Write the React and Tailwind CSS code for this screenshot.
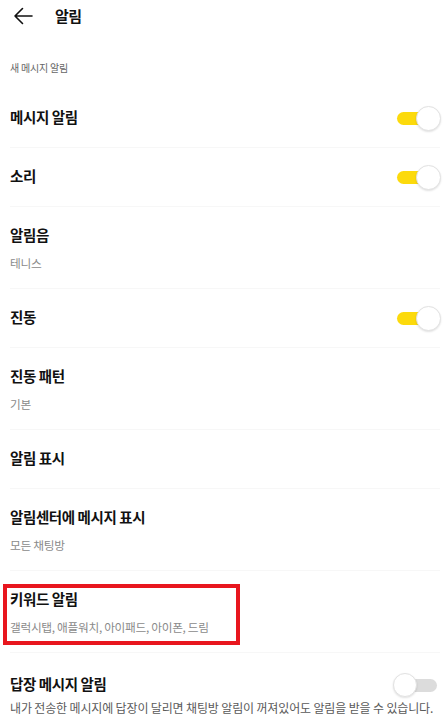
import React from "react";

const font = { fontFamily: '"Noto Sans CJK KR", "Noto Sans", sans-serif' };

function Toggle({ on }) {
  if (on) {
    return (
      <div className="relative w-[44px] h-[25px] shrink-0">
        <div className="absolute left-0 top-[6px] w-[40px] h-[13px] rounded-full bg-[#fcda0c]" />
        <div className="absolute right-0 top-0 w-[25px] h-[25px] rounded-full bg-white border border-[#e2e2e2] shadow-[0_1px_2px_rgba(0,0,0,0.12)]" />
      </div>
    );
  }
  return (
    <div className="relative w-[44px] h-[24px] shrink-0">
      <div className="absolute right-0 top-[6px] w-[38px] h-[13px] rounded-full bg-[#dcdcdc]" />
      <div className="absolute left-0 top-0 w-[24px] h-[24px] rounded-full bg-white border border-[#e2e2e2] shadow-[0_1px_2px_rgba(0,0,0,0.12)]" />
    </div>
  );
}

function Divider() {
  return <div className="ml-[10px] mr-[7px] h-px bg-[#f7f7f7]" />;
}

function SingleRow({ title, toggle }) {
  return (
    <div className="h-[58px] flex items-center justify-between pl-[10px] pr-[6px]">
      <span className="-mt-[3px] text-[14.5px] leading-[20px] font-bold text-[#111] tracking-[-0.4px]">{title}</span>
      {toggle !== undefined && <Toggle on={toggle} />}
    </div>
  );
}

function DoubleRow({ title, sub, box }) {
  return (
    <div className="relative pl-[10px] pr-[6px] pt-[18px] pb-[18px]">
      {box && (
        <div className="absolute left-[3px] top-[13px] w-[237px] h-[61px] border-[4px] border-[#e8161e] pointer-events-none" />
      )}
      <div className="text-[14.5px] leading-[20px] font-bold text-[#111] tracking-[-0.4px]">{title}</div>
      <div className="mt-[11px] text-[11.7px] leading-[14px] text-[#8a8a8a] tracking-[-0.3px]">{sub}</div>
    </div>
  );
}

export default function App() {
  return (
    <div className="w-[447px] h-[716px] bg-white overflow-hidden" style={font}>
      <div className="h-[31px] flex items-center">
        <svg className="ml-[13px]" width="20" height="18" viewBox="0 0 20 18" fill="none">
          <path d="M19 9H2M9.5 1.5L2 9l7.5 7.5" stroke="#111" strokeWidth="1.6" strokeLinecap="round" strokeLinejoin="round" />
        </svg>
        <span className="ml-[22px] text-[15px] leading-[20px] font-bold text-[#111] tracking-[-0.5px]">알림</span>
      </div>
      <div className="h-[58px] flex items-end pb-[15px] pl-[10px]">
        <span className="text-[10px] leading-[12px] text-[#666] tracking-[-0.2px]">새 메시지 알림</span>
      </div>
      <SingleRow title="메시지 알림" toggle={true} />
      <Divider />
      <SingleRow title="소리" toggle={true} />
      <Divider />
      <DoubleRow title="알림음" sub="테니스" />
      <Divider />
      <SingleRow title="진동" toggle={true} />
      <Divider />
      <DoubleRow title="진동 패턴" sub="기본" />
      <Divider />
      <SingleRow title="알림 표시" />
      <Divider />
      <DoubleRow title="알림센터에 메시지 표시" sub="모든 채팅방" />
      <Divider />
      <DoubleRow title="키워드 알림" sub="갤럭시탭, 애플워치, 아이패드, 아이폰, 드림" box />
      <Divider />
      <div className="pl-[10px] pr-[10px] pt-[20px]">
        <div className="flex items-center justify-between">
          <span className="-mt-[3px] text-[14.5px] leading-[20px] font-bold text-[#111] tracking-[-0.4px]">답장 메시지 알림</span>
          <Toggle on={false} />
        </div>
        <div className="mt-[4px] text-[12px] leading-[14px] text-[#5a5a5a] tracking-[-0.15px] whitespace-nowrap">
          내가 전송한 메시지에 답장이 달리면 채팅방 알림이 꺼져있어도 알림을 받을 수 있습니다.
        </div>
      </div>
    </div>
  );
}
